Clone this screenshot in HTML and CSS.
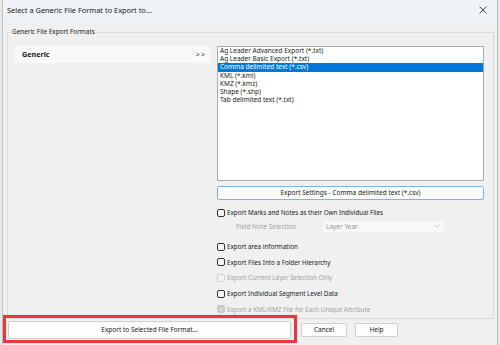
FILE: index.html
```html
<!DOCTYPE html>
<html>
<head>
<meta charset="utf-8">
<link rel="stylesheet" href="styles.css">
</head>
<body>
<div class="window">
  <div class="titlebar">
    <span class="title">Select a Generic File Format to Export to...</span>
    <svg class="close" width="8" height="8" viewBox="0 0 8 8"><path d="M0.5 0.5 L7.5 7.5 M7.5 0.5 L0.5 7.5" stroke="#333" stroke-width="0.9" fill="none"/></svg>
  </div>
  <div class="content">
    <fieldset class="group">
      <legend>Generic File Export Formats</legend>
      <div class="left">
        <div class="cat"><span class="cat-name">Generic</span><span class="arrow">&gt; &gt;</span></div>
      </div>
      <div class="right">
        <div class="listbox">
          <div class="item">Ag Leader Advanced Export (*.txt)</div>
          <div class="item">Ag Leader Basic Export (*.txt)</div>
          <div class="item selected">Comma delimited text (*.csv)</div>
          <div class="item">KML (*.kml)</div>
          <div class="item">KMZ (*.kmz)</div>
          <div class="item">Shape (*.shp)</div>
          <div class="item">Tab delimited text (*.txt)</div>
        </div>
        <div class="settings">Export Settings - Comma delimited text (*.csv)</div>
        <div class="check first"><span class="box"></span><span>Export Marks and Notes as their Own Individual Files</span></div>
        <div class="field">
          <span class="field-label">Field Note Selection</span>
          <div class="select"><span>Layer Year</span>
            <svg width="6" height="4" viewBox="0 0 6 4"><path d="M0.5 0.8 L3 3.2 L5.5 0.8" stroke="#b5b5b5" stroke-width="0.7" fill="none"/></svg>
          </div>
        </div>
        <div class="check gap"><span class="box"></span><span>Export area information</span></div>
        <div class="check"><span class="box"></span><span>Export Files Into a Folder Hierarchy</span></div>
        <div class="check disabled"><span class="box"></span><span>Export Current Layer Selection Only</span></div>
        <div class="check"><span class="box"></span><span>Export Individual Segment Level Data</span></div>
        <div class="check disabled"><span class="box checked">
          <svg width="6" height="6" viewBox="0 0 6 6"><path d="M1 3.1 L2.4 4.5 L5 1.6" stroke="#fff" stroke-width="0.9" fill="none"/></svg>
        </span><span>Export a KML/KMZ File for Each Unique Attribute</span></div>
      </div>
    </fieldset>
    <div class="actions">
      <div class="btn main">Export to Selected File Format...</div>
      <div class="btn cancel">Cancel</div>
      <div class="btn help">Help</div>
    </div>
  </div>
</div>
<div class="highlight"></div>
</body>
</html>
```
FILE: styles.css
```css
html, body {
  margin: 0;
  padding: 0;
  background: #e9e9e9;
  font-family: "Noto Sans", "Open Sans", sans-serif;
  color: #1b1b1b;
  overflow: hidden;
}
body {
  width: 500px;
  height: 345px;
  position: relative;
}
.window {
  margin-left: 2px;
  width: 496px;
  height: 360px;
  box-sizing: border-box;
  border-left: 1px solid #c3c3c3;
  border-right: 1px solid #b9b9b9;
  background: #f0f0f0;
}
.titlebar {
  height: 20px;
  background: #eef3f8;
  display: flex;
  align-items: center;
  justify-content: space-between;
  padding: 0 10px 0 4px;
}
.title {
  font-size: 7.4px;
  color: #1a1a1a;
}
.close {
  display: block;
}
.content {
  padding: 8px 3px 0 4px;
}
.group {
  margin: 0;
  padding: 9.5px 9px 1.5px 7px;
  border: 1px solid #dadada;
  border-radius: 0;
  display: flex;
  gap: 7px;
  min-width: 0;
}
.group legend {
  font-size: 6.4px;
  line-height: 8px;
  padding: 0 1px;
  margin-left: -4px;
  color: #222;
}
.left {
  width: 195px;
  flex: none;
}
.cat {
  height: 17px;
  background: #f9f9f9;
  border-radius: 2px;
  display: flex;
  align-items: center;
  justify-content: space-between;
  padding: 0 5px 0 7px;
}
.cat-name {
  font-weight: bold;
  font-size: 7.2px;
}
.arrow {
  font-size: 6.4px;
  color: #333;
}
.right {
  width: 267px;
  flex: none;
  display: flex;
  flex-direction: column;
  font-size: 6.5px;
}
.listbox {
  height: 135px;
  box-sizing: border-box;
  border: 1px solid #acacac;
  background: #fff;
  padding-top: 0.2px;
}
.item {
  height: 8.3px;
  line-height: 8.3px;
  padding-left: 2px;
  white-space: nowrap;
}
.item.selected {
  background: #0078d7;
  color: #fff;
}
.settings {
  margin-top: 5.5px;
  height: 13.5px;
  box-sizing: border-box;
  border: 1px solid #7fb3e6;
  border-radius: 2px;
  background: #fbfbfb;
  display: flex;
  align-items: center;
  justify-content: center;
}
.check {
  height: 15.6px;
  display: flex;
  align-items: center;
  gap: 2px;
  white-space: nowrap;
  font-size: 6.3px;
}
.check.first {
  margin-top: 5.5px;
}
.check.gap {
  margin-top: 7px;
}
.box {
  width: 8px;
  height: 8px;
  box-sizing: border-box;
  border: 1px solid #333;
  border-radius: 2px;
  background: #f7f7f7;
  flex: none;
  display: flex;
  align-items: center;
  justify-content: center;
}
.check.disabled {
  color: #a3a3a3;
}
.check.disabled .box {
  border-color: #cfcfcf;
  background: #f4f4f4;
}
.check.disabled .box.checked {
  background: #c9c9c9;
  border-color: #c9c9c9;
}
.field {
  height: 11.4px;
  display: flex;
  align-items: center;
}
.field-label {
  color: #a3a3a3;
  margin-left: 19px;
  width: 87px;
}
.select {
  width: 121px;
  height: 10.5px;
  background: #f8f8f8;
  display: flex;
  align-items: center;
  justify-content: space-between;
  padding: 0 4px 0 3px;
  box-sizing: border-box;
  color: #9a9a9a;
}
.select svg {
  display: block;
}
.actions {
  display: flex;
  align-items: center;
  height: 21px;
  padding-left: 1px;
  font-size: 6.5px;
}
.btn {
  box-sizing: border-box;
  border: 1px solid #cfcfcf;
  border-radius: 2px;
  background: #fdfdfd;
  display: flex;
  align-items: center;
  justify-content: center;
}
.main {
  width: 283px;
  height: 18px;
}
.cancel {
  width: 46px;
  height: 14px;
  margin-left: 10px;
}
.help {
  width: 43px;
  height: 14px;
  margin-left: 8px;
}
.highlight {
  position: absolute;
  left: 3px;
  top: 315px;
  width: 294px;
  height: 28px;
  box-sizing: border-box;
  border: 3px solid #e8383e;
  box-shadow: 0 0 1px rgba(0,0,0,0.25);
}
```
